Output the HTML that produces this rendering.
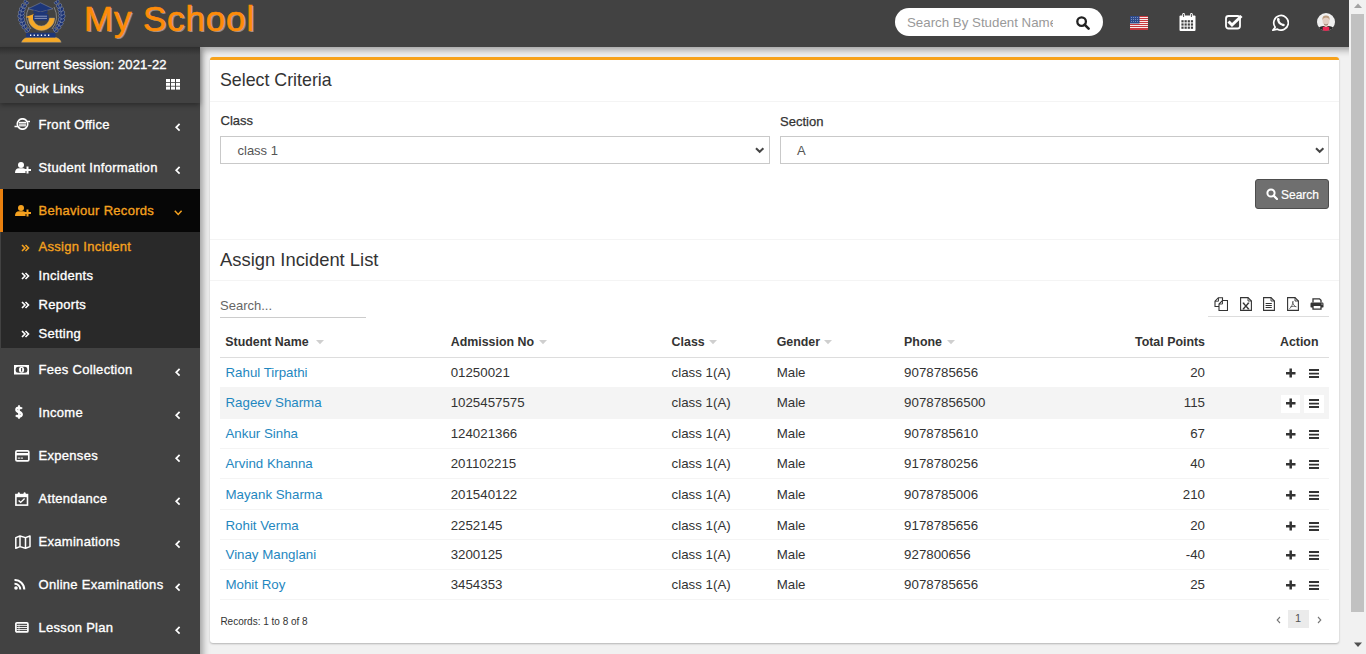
<!DOCTYPE html><html><head><meta charset="utf-8"><title>Assign Incident</title><style>
*{margin:0;padding:0;box-sizing:border-box}
html,body{width:1366px;height:654px;overflow:hidden;background:#f1f1f1;font-family:"Liberation Sans",sans-serif}
.t{position:absolute;line-height:1;white-space:nowrap}
.a{position:absolute;display:block}
.sb{color:#fff;-webkit-text-stroke:0.35px #fff;letter-spacing:0.3px}
.sbo{color:#f4a11f;-webkit-text-stroke:0.35px #f4a11f;letter-spacing:0.3px}
.th{color:#333;font-weight:bold}
.td{color:#333}
</style></head><body>
<div class="a" style="left:200px;top:47px;width:1300px;height:700px;box-shadow:inset 3px 3px 7px rgba(0,0,0,.35)"></div>
<div class="a" style="left:0;top:0;width:1349px;height:47px;background:#424242"></div>
<svg class="a" style="left:10px;top:0px;" width="65" height="46" viewBox="10 0 65 46">
<ellipse cx="26.6" cy="31.06" rx="1.82" ry="1.29" transform="rotate(-166.7 26.60 31.06)" fill="#1b3274" stroke="#b4bccf" stroke-width="0.35"/><ellipse cx="28.24" cy="29.6" rx="1.82" ry="1.29" transform="rotate(-96.7 28.24 29.60)" fill="#1b3274" stroke="#b4bccf" stroke-width="0.35"/><ellipse cx="23.88" cy="27.57" rx="2.03" ry="1.44" transform="rotate(-158.9 23.88 27.57)" fill="#1b3274" stroke="#b4bccf" stroke-width="0.35"/><ellipse cx="25.7" cy="26.34" rx="2.03" ry="1.44" transform="rotate(-88.9 25.70 26.34)" fill="#1b3274" stroke="#b4bccf" stroke-width="0.35"/><ellipse cx="21.87" cy="24.01" rx="2.23" ry="1.59" transform="rotate(-149.7 21.87 24.01)" fill="#1b3274" stroke="#b4bccf" stroke-width="0.35"/><ellipse cx="23.87" cy="23.09" rx="2.23" ry="1.59" transform="rotate(-79.7 23.87 23.09)" fill="#1b3274" stroke="#b4bccf" stroke-width="0.35"/><ellipse cx="20.58" cy="20.37" rx="2.44" ry="1.72" transform="rotate(-139.1 20.58 20.37)" fill="#1b3274" stroke="#b4bccf" stroke-width="0.35"/><ellipse cx="22.71" cy="19.84" rx="2.44" ry="1.72" transform="rotate(-69.1 22.71 19.84)" fill="#1b3274" stroke="#b4bccf" stroke-width="0.35"/><ellipse cx="20.03" cy="16.68" rx="2.64" ry="1.88" transform="rotate(-127.7 20.03 16.68)" fill="#1b3274" stroke="#b4bccf" stroke-width="0.35"/><ellipse cx="22.22" cy="16.57" rx="2.64" ry="1.88" transform="rotate(-57.7 22.22 16.57)" fill="#1b3274" stroke="#b4bccf" stroke-width="0.35"/><ellipse cx="20.22" cy="12.94" rx="2.44" ry="1.72" transform="rotate(-116.4 20.22 12.94)" fill="#1b3274" stroke="#b4bccf" stroke-width="0.35"/><ellipse cx="22.4" cy="13.27" rx="2.44" ry="1.72" transform="rotate(-46.4 22.40 13.27)" fill="#1b3274" stroke="#b4bccf" stroke-width="0.35"/><ellipse cx="21.16" cy="9.19" rx="2.23" ry="1.59" transform="rotate(-105.9 21.16 9.19)" fill="#1b3274" stroke="#b4bccf" stroke-width="0.35"/><ellipse cx="23.24" cy="9.91" rx="2.23" ry="1.59" transform="rotate(-35.9 23.24 9.91)" fill="#1b3274" stroke="#b4bccf" stroke-width="0.35"/><ellipse cx="22.82" cy="5.44" rx="2.03" ry="1.44" transform="rotate(-96.7 22.82 5.44)" fill="#1b3274" stroke="#b4bccf" stroke-width="0.35"/><ellipse cx="24.76" cy="6.48" rx="2.03" ry="1.44" transform="rotate(-26.7 24.76 6.48)" fill="#1b3274" stroke="#b4bccf" stroke-width="0.35"/><ellipse cx="25.2" cy="1.68" rx="1.82" ry="1.29" transform="rotate(-89.0 25.20 1.68)" fill="#1b3274" stroke="#b4bccf" stroke-width="0.35"/><ellipse cx="26.98" cy="2.97" rx="1.82" ry="1.29" transform="rotate(-19.0 26.98 2.97)" fill="#1b3274" stroke="#b4bccf" stroke-width="0.35"/><ellipse cx="54.76" cy="29.6" rx="1.82" ry="1.29" transform="rotate(-83.3 54.76 29.60)" fill="#1b3274" stroke="#b4bccf" stroke-width="0.35"/><ellipse cx="56.4" cy="31.06" rx="1.82" ry="1.29" transform="rotate(-13.3 56.40 31.06)" fill="#1b3274" stroke="#b4bccf" stroke-width="0.35"/><ellipse cx="57.3" cy="26.34" rx="2.03" ry="1.44" transform="rotate(-91.1 57.30 26.34)" fill="#1b3274" stroke="#b4bccf" stroke-width="0.35"/><ellipse cx="59.12" cy="27.57" rx="2.03" ry="1.44" transform="rotate(-21.1 59.12 27.57)" fill="#1b3274" stroke="#b4bccf" stroke-width="0.35"/><ellipse cx="59.13" cy="23.09" rx="2.23" ry="1.59" transform="rotate(-100.3 59.13 23.09)" fill="#1b3274" stroke="#b4bccf" stroke-width="0.35"/><ellipse cx="61.13" cy="24.01" rx="2.23" ry="1.59" transform="rotate(-30.3 61.13 24.01)" fill="#1b3274" stroke="#b4bccf" stroke-width="0.35"/><ellipse cx="60.29" cy="19.84" rx="2.44" ry="1.72" transform="rotate(-110.9 60.29 19.84)" fill="#1b3274" stroke="#b4bccf" stroke-width="0.35"/><ellipse cx="62.42" cy="20.37" rx="2.44" ry="1.72" transform="rotate(-40.9 62.42 20.37)" fill="#1b3274" stroke="#b4bccf" stroke-width="0.35"/><ellipse cx="60.78" cy="16.57" rx="2.64" ry="1.88" transform="rotate(-122.3 60.78 16.57)" fill="#1b3274" stroke="#b4bccf" stroke-width="0.35"/><ellipse cx="62.97" cy="16.68" rx="2.64" ry="1.88" transform="rotate(-52.3 62.97 16.68)" fill="#1b3274" stroke="#b4bccf" stroke-width="0.35"/><ellipse cx="60.6" cy="13.27" rx="2.44" ry="1.72" transform="rotate(-133.6 60.60 13.27)" fill="#1b3274" stroke="#b4bccf" stroke-width="0.35"/><ellipse cx="62.78" cy="12.94" rx="2.44" ry="1.72" transform="rotate(-63.6 62.78 12.94)" fill="#1b3274" stroke="#b4bccf" stroke-width="0.35"/><ellipse cx="59.76" cy="9.91" rx="2.23" ry="1.59" transform="rotate(-144.1 59.76 9.91)" fill="#1b3274" stroke="#b4bccf" stroke-width="0.35"/><ellipse cx="61.84" cy="9.19" rx="2.23" ry="1.59" transform="rotate(-74.1 61.84 9.19)" fill="#1b3274" stroke="#b4bccf" stroke-width="0.35"/><ellipse cx="58.24" cy="6.48" rx="2.03" ry="1.44" transform="rotate(-153.3 58.24 6.48)" fill="#1b3274" stroke="#b4bccf" stroke-width="0.35"/><ellipse cx="60.18" cy="5.44" rx="2.03" ry="1.44" transform="rotate(-83.3 60.18 5.44)" fill="#1b3274" stroke="#b4bccf" stroke-width="0.35"/><ellipse cx="56.02" cy="2.97" rx="1.82" ry="1.29" transform="rotate(-161.0 56.02 2.97)" fill="#1b3274" stroke="#b4bccf" stroke-width="0.35"/><ellipse cx="57.8" cy="1.68" rx="1.82" ry="1.29" transform="rotate(-91.0 57.80 1.68)" fill="#1b3274" stroke="#b4bccf" stroke-width="0.35"/>
<path d="M31 29 Q 23 19 29 7" fill="none" stroke="#8a8a8a" stroke-width="0.9"/>
<path d="M52 29 Q 60 19 54 7" fill="none" stroke="#8a8a8a" stroke-width="0.9"/>
<path d="M28.3 18 A 13.2 12.5 0 0 0 54.7 18 L 49.5 18 A 8.3 9 0 0 1 33 18 Z" fill="#f6a927" stroke="#9a9a9a" stroke-width="0.4"/>
<path d="M25.5 17 L 34 14 L 34 19.5 Z" fill="#f6a927"/>
<rect x="33" y="14" width="15.5" height="6.4" rx="1.5" fill="#1d3679"/>
<rect x="34.5" y="15.8" width="12.5" height="0.7" fill="#b9c0d8"/>
<rect x="34.5" y="17.9" width="12.5" height="0.7" fill="#b9c0d8"/>
<path d="M28 8.8 L 40.5 2.8 L 53 8.8 L 40.5 12 Z" fill="#1d3679" stroke="#8d93a3" stroke-width="0.5"/>
<path d="M33.5 10 Q 40.5 14 47.5 10 L 47.5 13.2 Q 40.5 15.5 33.5 13.2 Z" fill="#1d3679"/>
<path d="M21.5 42.3 Q 23.5 37 30 37.3 L 53 37.3 Q 59.5 37 61.2 42.3 Z" fill="#f6a927" stroke="#9a9a9a" stroke-width="0.4"/>
<rect x="26" y="32.8" width="29.5" height="4.8" rx="1.2" fill="#1d3679"/>
<g fill="#fff"><rect x="30" y="34.5" width="1.3" height="1.5"/><rect x="33.6" y="34.5" width="1.3" height="1.5"/><rect x="37.2" y="34.5" width="1.3" height="1.5"/><rect x="40.8" y="34.5" width="1.3" height="1.5"/><rect x="44.4" y="34.5" width="1.3" height="1.5"/><rect x="48" y="34.5" width="1.3" height="1.5"/></g>
</svg>
<div class="t " style="left:84.00px;top:1.17px;font-size:35px;color:#fd8b08;letter-spacing:0.85px;-webkit-text-stroke:0.7px #fd8b08;text-shadow:1.6px 1px 0 #8f8f8f">My School</div>
<div class="a" style="left:895px;top:8px;width:208px;height:28px;border-radius:14px;background:#fff"></div>
<div class="a" style="left:907px;top:0;width:146px;height:46px;overflow:hidden"><div class="t " style="left:0.00px;top:16.14px;font-size:13.3px;color:#999">Search By Student Name</div>
</div>
<svg class="a" style="left:1076px;top:16px;" width="14" height="14" viewBox="0 0 14 14"><circle cx="5.6" cy="5.6" r="4.3" fill="none" stroke="#222" stroke-width="2.3"/><path d="M8.6 8.6 L12.6 12.6" stroke="#222" stroke-width="2.6" stroke-linecap="round"/></svg>
<svg class="a" style="left:1130px;top:16px;" width="18" height="14" viewBox="0 0 18 14"><rect width="18" height="14" fill="#fff"/><rect y="0" width="18" height="1.1" fill="#c8393f"/><rect y="2" width="18" height="1.1" fill="#c8393f"/><rect y="4" width="18" height="1.1" fill="#c8393f"/><rect y="6" width="18" height="1.1" fill="#c8393f"/><rect y="8" width="18" height="1.1" fill="#c8393f"/><rect y="10" width="18" height="1.1" fill="#c8393f"/><rect y="12" width="18" height="1.1" fill="#c8393f"/><rect y="13" width="18" height="1" fill="#c8393f"/><rect width="9.5" height="7.5" fill="#2d4a8a"/><g fill="#aab6d6"><rect x="1" y="1" width="0.8" height="0.8"/><rect x="3" y="1" width="0.8" height="0.8"/><rect x="5" y="1" width="0.8" height="0.8"/><rect x="7" y="1" width="0.8" height="0.8"/><rect x="1" y="3" width="0.8" height="0.8"/><rect x="3" y="3" width="0.8" height="0.8"/><rect x="5" y="3" width="0.8" height="0.8"/><rect x="7" y="3" width="0.8" height="0.8"/><rect x="1" y="5" width="0.8" height="0.8"/><rect x="3" y="5" width="0.8" height="0.8"/><rect x="5" y="5" width="0.8" height="0.8"/><rect x="7" y="5" width="0.8" height="0.8"/></g></svg>
<svg class="a" style="left:1179px;top:13px;" width="17" height="18" viewBox="0 0 17 18"><rect x="0.5" y="2.5" width="16" height="15.5" rx="1" fill="#fff"/><rect x="2.40" y="7.20" width="2.2" height="2.2" fill="#424242"/><rect x="5.55" y="7.20" width="2.2" height="2.2" fill="#424242"/><rect x="8.70" y="7.20" width="2.2" height="2.2" fill="#424242"/><rect x="11.85" y="7.20" width="2.2" height="2.2" fill="#424242"/><rect x="2.40" y="10.40" width="2.2" height="2.2" fill="#424242"/><rect x="5.55" y="10.40" width="2.2" height="2.2" fill="#424242"/><rect x="8.70" y="10.40" width="2.2" height="2.2" fill="#424242"/><rect x="11.85" y="10.40" width="2.2" height="2.2" fill="#424242"/><rect x="2.40" y="13.60" width="2.2" height="2.2" fill="#424242"/><rect x="5.55" y="13.60" width="2.2" height="2.2" fill="#424242"/><rect x="8.70" y="13.60" width="2.2" height="2.2" fill="#424242"/><rect x="11.85" y="13.60" width="2.2" height="2.2" fill="#424242"/><rect x="3.3" y="0" width="2.6" height="5" rx="1.3" fill="#fff"/><rect x="11.1" y="0" width="2.6" height="5" rx="1.3" fill="#fff"/><rect x="4.1" y="1" width="1" height="3" fill="#555"/><rect x="11.9" y="1" width="1" height="3" fill="#555"/></svg>
<svg class="a" style="left:1225px;top:14px;" width="18" height="16" viewBox="0 0 18 16"><rect x="1" y="2" width="14" height="12.5" rx="2.5" fill="none" stroke="#fff" stroke-width="1.8"/><path d="M3.5 7.5 L7 11 L16.5 2" fill="none" stroke="#fff" stroke-width="3" stroke-linejoin="miter"/></svg>
<svg class="a" style="left:1272px;top:14px;" width="17" height="17" viewBox="0 0 17 17"><path d="M3.2 13.2 A7.3 7.3 0 1 1 5.5 15.2 L0.8 16.2 Z" fill="none" stroke="#fff" stroke-width="1.7" stroke-linejoin="round"/><path d="M6.2 5.6 Q 6.4 9.6 11.2 11" fill="none" stroke="#fff" stroke-width="2.1" stroke-linecap="round"/><circle cx="6.3" cy="5.4" r="1.3" fill="#fff"/><circle cx="11.4" cy="11" r="1.3" fill="#fff"/></svg>
<svg class="a" style="left:1317px;top:13px;" width="18" height="18" viewBox="0 0 18 18"><defs><clipPath id="avc"><circle cx="9" cy="9" r="9"/></clipPath></defs><circle cx="9" cy="9" r="9" fill="#f0f0f0"/><g clip-path="url(#avc)"><path d="M0 19 L 1.5 14.5 Q 4 13 6 13 L 12 13 Q 14 13 16.5 14.5 L 18 19 Z" fill="#2b2b2b"/><path d="M5.5 19 L 5.8 13.8 L 12.2 13.8 L 12.5 19 Z" fill="#ee2a56"/><rect x="7.6" y="11" width="2.8" height="3" fill="#d8b9a9"/><ellipse cx="9" cy="7.6" rx="3.5" ry="4.6" fill="#e4cfc4"/><path d="M5.4 7 Q 5 2.6 9 2.6 Q 13 2.6 12.6 7 Q 12 4.5 9 4.4 Q 6 4.5 5.4 7 Z" fill="#bc9d80"/><path d="M7 11.2 Q 9 12.6 11 11.2" stroke="#9a7f6f" stroke-width="0.9" fill="none"/></g></svg>
<div class="a" style="left:0;top:47px;width:200px;height:607px;background:#424242"></div>
<div class="a" style="left:0;top:47px;width:200px;height:8px;background:linear-gradient(#2e2e2e,#424242)"></div>
<div class="a" style="left:0;top:47px;width:200px;height:56px;background:linear-gradient(#2e2e2e,#424242 8px);box-shadow:0 2px 5px rgba(0,0,0,.35)"></div>
<div class="t sb" style="left:15.00px;top:58.00px;font-size:13px;letter-spacing:0.15px">Current Session: 2021-22</div>
<div class="t sb" style="left:15.00px;top:81.70px;font-size:13px;letter-spacing:0.15px">Quick Links</div>
<svg class="a" style="left:166px;top:79px;" width="14" height="11" viewBox="0 0 14 11"><g fill="#fff"><rect x="0" y="0.0" width="4" height="3" /><rect x="5" y="0.0" width="4" height="3" /><rect x="10" y="0.0" width="4" height="3" /><rect x="0" y="3.8" width="4" height="3" /><rect x="5" y="3.8" width="4" height="3" /><rect x="10" y="3.8" width="4" height="3" /><rect x="0" y="7.6" width="4" height="3" /><rect x="5" y="7.6" width="4" height="3" /><rect x="10" y="7.6" width="4" height="3" /></g></svg>
<svg class="a" style="left:14px;top:118px;" width="17" height="12" viewBox="0 0 17 12"><circle cx="8.5" cy="6" r="5.2" fill="none" stroke="#fff" stroke-width="1.7"/><rect x="5" y="3.8" width="7" height="1.2" fill="#fff"/><rect x="5" y="5.5" width="7" height="1.2" fill="#fff"/><rect x="5" y="7.2" width="7" height="1.2" fill="#fff"/><path d="M0.5 8.6 H4 M13 3.4 H16" stroke="#fff" stroke-width="1.5"/></svg>
<svg class="a" style="left:174px;top:123px;" width="7" height="9" viewBox="0 0 7 9"><path d="M5.6 0.9 L2.2 4.3 L5.6 7.7" fill="none" stroke="#fff" stroke-width="1.7"/></svg>
<div class="t sb" style="left:38.50px;top:117.70px;font-size:13px;">Front Office</div>
<svg class="a" style="left:14.5px;top:162px;" width="17" height="12" viewBox="0 0 17 12"><circle cx="6" cy="3" r="3" fill="#fff"/><path d="M0 11 Q0 6.5 4 6.3 L8 6.3 Q 9.5 6.4 10.5 7.5 L 10.5 11 Z" fill="#fff"/><path d="M9 8 H16 M12.5 4.5 V11.5" stroke="#fff" stroke-width="2"/><path d="M8.8 6.5 V 11" stroke="#424242" stroke-width="0.8" opacity="0"/></svg>
<svg class="a" style="left:174px;top:166px;" width="7" height="9" viewBox="0 0 7 9"><path d="M5.6 0.9 L2.2 4.3 L5.6 7.7" fill="none" stroke="#fff" stroke-width="1.7"/></svg>
<div class="t sb" style="left:38.50px;top:161.00px;font-size:13px;">Student Information</div>
<div class="a" style="left:0;top:189px;width:200px;height:43px;background:#060606"></div>
<div class="a" style="left:0;top:189px;width:3px;height:43px;background:#e8800f"></div>
<svg class="a" style="left:14.5px;top:205px;" width="17" height="12" viewBox="0 0 17 12"><circle cx="6" cy="3" r="3" fill="#f4a11f"/><path d="M0 11 Q0 6.5 4 6.3 L8 6.3 Q 9.5 6.4 10.5 7.5 L 10.5 11 Z" fill="#f4a11f"/><path d="M9 8 H16 M12.5 4.5 V11.5" stroke="#f4a11f" stroke-width="2"/><path d="M8.8 6.5 V 11" stroke="#424242" stroke-width="0.8" opacity="0"/></svg>
<svg class="a" style="left:174px;top:209.5px;" width="9" height="6" viewBox="0 0 9 6"><path d="M0.8 0.8 L4.2 4.4 L7.6 0.8" fill="none" stroke="#f4a11f" stroke-width="1.5"/></svg>
<div class="t sbo" style="left:38.50px;top:204.00px;font-size:13px;">Behaviour Records</div>
<div class="a" style="left:1px;top:232px;width:199px;height:116px;background:#292929"></div>
<svg class="a" style="left:20.5px;top:243.6px;" width="9" height="8" viewBox="0 0 9 8"><path d="M1 1 L4 4 L1 7 M4.5 1 L7.5 4 L4.5 7" fill="none" stroke="#f4a11f" stroke-width="1.6"/></svg>
<div class="t sbo" style="left:38.50px;top:239.90px;font-size:13px;">Assign Incident</div>
<svg class="a" style="left:20.5px;top:272.4px;" width="9" height="8" viewBox="0 0 9 8"><path d="M1 1 L4 4 L1 7 M4.5 1 L7.5 4 L4.5 7" fill="none" stroke="#fff" stroke-width="1.6"/></svg>
<div class="t sb" style="left:38.50px;top:268.70px;font-size:13px;">Incidents</div>
<svg class="a" style="left:20.5px;top:301.4px;" width="9" height="8" viewBox="0 0 9 8"><path d="M1 1 L4 4 L1 7 M4.5 1 L7.5 4 L4.5 7" fill="none" stroke="#fff" stroke-width="1.6"/></svg>
<div class="t sb" style="left:38.50px;top:297.70px;font-size:13px;">Reports</div>
<svg class="a" style="left:20.5px;top:330.4px;" width="9" height="8" viewBox="0 0 9 8"><path d="M1 1 L4 4 L1 7 M4.5 1 L7.5 4 L4.5 7" fill="none" stroke="#fff" stroke-width="1.6"/></svg>
<div class="t sb" style="left:38.50px;top:326.70px;font-size:13px;">Setting</div>
<svg class="a" style="left:14.3px;top:364.7px;" width="15" height="10" viewBox="0 0 15 10"><rect x="0" y="0" width="15" height="9.5" fill="#fff"/><rect x="1.7" y="1.7" width="11.6" height="6.1" rx="2.5" fill="#424242"/><ellipse cx="7.5" cy="4.75" rx="2.6" ry="2.9" fill="#fff"/><path d="M7.6 3 V6.6" stroke="#424242" stroke-width="1.1"/></svg>
<svg class="a" style="left:174px;top:368.4px;" width="7" height="9" viewBox="0 0 7 9"><path d="M5.6 0.9 L2.2 4.3 L5.6 7.7" fill="none" stroke="#fff" stroke-width="1.7"/></svg>
<div class="t sb" style="left:38.50px;top:362.90px;font-size:13px;">Fees Collection</div>
<svg class="a" style="left:14.8px;top:405.4px;" width="8" height="14" viewBox="0 0 8 14"><path d="M6.9 3.8 Q 6 2.6 4 2.6 Q 1.4 2.6 1.4 4.7 Q 1.4 6.3 4 7 Q 6.7 7.7 6.7 9.6 Q 6.7 11.5 4 11.5 Q 2 11.5 1 10.2" fill="none" stroke="#fff" stroke-width="2.4"/><path d="M4 0.3 V13.7" stroke="#fff" stroke-width="1.8"/></svg>
<svg class="a" style="left:174px;top:411.4px;" width="7" height="9" viewBox="0 0 7 9"><path d="M5.6 0.9 L2.2 4.3 L5.6 7.7" fill="none" stroke="#fff" stroke-width="1.7"/></svg>
<div class="t sb" style="left:38.50px;top:405.90px;font-size:13px;">Income</div>
<svg class="a" style="left:14.8px;top:449.8px;" width="15" height="12" viewBox="0 0 15 12"><rect x="0.9" y="0.9" width="12.9" height="10" rx="1.2" fill="none" stroke="#fff" stroke-width="1.7"/><rect x="1" y="3" width="13" height="2.4" fill="#fff"/><rect x="2.8" y="7.6" width="2.6" height="1" fill="#fff"/><rect x="6" y="7.6" width="2" height="1" fill="#fff"/></svg>
<svg class="a" style="left:174px;top:454.4px;" width="7" height="9" viewBox="0 0 7 9"><path d="M5.6 0.9 L2.2 4.3 L5.6 7.7" fill="none" stroke="#fff" stroke-width="1.7"/></svg>
<div class="t sb" style="left:38.50px;top:448.90px;font-size:13px;">Expenses</div>
<svg class="a" style="left:14.5px;top:491.6px;" width="14" height="14" viewBox="0 0 14 14"><rect x="0.9" y="2.6" width="11.6" height="10.5" fill="none" stroke="#fff" stroke-width="1.6"/><rect x="1" y="2.6" width="11.5" height="2.6" fill="#fff"/><rect x="2.8" y="0.3" width="2" height="3.2" rx="1" fill="#fff"/><rect x="8.6" y="0.3" width="2" height="3.2" rx="1" fill="#fff"/><path d="M3.6 8.4 L5.7 10.4 L9.6 6.6" fill="none" stroke="#fff" stroke-width="1.4"/></svg>
<svg class="a" style="left:174px;top:497.4px;" width="7" height="9" viewBox="0 0 7 9"><path d="M5.6 0.9 L2.2 4.3 L5.6 7.7" fill="none" stroke="#fff" stroke-width="1.7"/></svg>
<div class="t sb" style="left:38.50px;top:491.90px;font-size:13px;">Attendance</div>
<svg class="a" style="left:14.5px;top:534.5px;" width="16" height="14" viewBox="0 0 16 14"><path d="M0.8 2.6 L5 1 L10.5 2.6 L15 1 V11.6 L10.5 13.2 L5 11.6 L0.8 13.2 Z" fill="none" stroke="#fff" stroke-width="1.5" stroke-linejoin="round"/><path d="M5 1 V11.6 M10.5 2.6 V13.2" stroke="#fff" stroke-width="1.5"/></svg>
<svg class="a" style="left:174px;top:540.4px;" width="7" height="9" viewBox="0 0 7 9"><path d="M5.6 0.9 L2.2 4.3 L5.6 7.7" fill="none" stroke="#fff" stroke-width="1.7"/></svg>
<div class="t sb" style="left:38.50px;top:534.90px;font-size:13px;">Examinations</div>
<svg class="a" style="left:14.3px;top:579px;" width="12" height="11" viewBox="0 0 12 11"><circle cx="2" cy="9" r="1.8" fill="#fff"/><path d="M0.5 4.7 A 5.8 5.8 0 0 1 6.3 10.5" fill="none" stroke="#fff" stroke-width="2"/><path d="M0.5 1 A 9.5 9.5 0 0 1 10.3 10.5" fill="none" stroke="#fff" stroke-width="2"/></svg>
<svg class="a" style="left:174px;top:583.4px;" width="7" height="9" viewBox="0 0 7 9"><path d="M5.6 0.9 L2.2 4.3 L5.6 7.7" fill="none" stroke="#fff" stroke-width="1.7"/></svg>
<div class="t sb" style="left:38.50px;top:577.90px;font-size:13px;">Online Examinations</div>
<svg class="a" style="left:14.8px;top:621.8px;" width="14" height="11" viewBox="0 0 14 11"><rect x="0.9" y="0.9" width="12" height="9" rx="1" fill="none" stroke="#fff" stroke-width="1.7"/><path d="M1.5 3.4 H12.3 M1.5 5.5 H12.3 M1.5 7.6 H12.3" stroke="#fff" stroke-width="0.9"/><path d="M4 2.5 V10" stroke="#fff" stroke-width="0.6"/></svg>
<svg class="a" style="left:174px;top:626.4px;" width="7" height="9" viewBox="0 0 7 9"><path d="M5.6 0.9 L2.2 4.3 L5.6 7.7" fill="none" stroke="#fff" stroke-width="1.7"/></svg>
<div class="t sb" style="left:38.50px;top:620.90px;font-size:13px;">Lesson Plan</div>
<div class="a" style="left:210px;top:57px;width:1129px;height:586px;background:#fff;border-top:3px solid #f7a21b;border-radius:3px;box-shadow:0 1px 2px rgba(0,0,0,.25)"></div>
<div class="t " style="left:220.00px;top:71.73px;font-size:17.8px;color:#333">Select Criteria</div>
<div class="a" style="left:210px;top:101px;width:1129px;height:1px;background:#f4f4f4"></div>
<div class="t " style="left:220.50px;top:114.30px;font-size:13px;color:#333;-webkit-text-stroke:0.25px #333">Class</div>
<div class="t " style="left:780.00px;top:114.50px;font-size:13px;color:#333;-webkit-text-stroke:0.25px #333">Section</div>
<div class="a" style="left:220px;top:136px;width:550px;height:28px;border:1px solid #c9c9c9"></div>
<div class="a" style="left:780px;top:136px;width:549px;height:28px;border:1px solid #c9c9c9"></div>
<div class="t " style="left:237.50px;top:143.60px;font-size:13px;color:#555">class 1</div>
<div class="t " style="left:797.00px;top:143.70px;font-size:13px;color:#555">A</div>
<svg class="a" style="left:755px;top:147px;" width="10" height="7" viewBox="0 0 10 7"><path d="M1 1.2 L4.7 4.8 L8.4 1.2" fill="none" stroke="#444" stroke-width="2"/></svg>
<svg class="a" style="left:1315px;top:147px;" width="10" height="7" viewBox="0 0 10 7"><path d="M1 1.2 L4.7 4.8 L8.4 1.2" fill="none" stroke="#444" stroke-width="2"/></svg>
<div class="a" style="left:1255px;top:179px;width:74px;height:30px;background:#6f6f6f;border:1px solid #4d4d4d;border-radius:3px"></div>
<svg class="a" style="left:1266px;top:188px;" width="12" height="12" viewBox="0 0 12 12"><circle cx="5" cy="5" r="3.6" fill="none" stroke="#fff" stroke-width="2"/><path d="M7.6 7.6 L11 11" stroke="#fff" stroke-width="2.2" stroke-linecap="round"/></svg>
<div class="t " style="left:1281.00px;top:188.64px;font-size:12px;color:#fff;-webkit-text-stroke:0.2px #fff">Search</div>
<div class="a" style="left:210px;top:239px;width:1129px;height:1px;background:#f4f4f4"></div>
<div class="t " style="left:220.00px;top:251.42px;font-size:18.4px;color:#333">Assign Incident List</div>
<div class="a" style="left:210px;top:280px;width:1129px;height:1px;background:#f4f4f4"></div>
<div class="t " style="left:220.00px;top:299.00px;font-size:13px;color:#666">Search...</div>
<div class="a" style="left:220px;top:317px;width:146px;height:1px;background:#ccc"></div>
<div class="a" style="left:1208px;top:316px;width:121px;height:1px;background:#ddd"></div>
<svg class="a" style="left:1214px;top:297px;" width="14" height="14" viewBox="0 0 14 14"><path d="M4.5 0.7 H8.5 V3.5 M4.5 0.7 L1 4.2 V9.5 H5" fill="none" stroke="#333" stroke-width="1.1"/><path d="M1 4.2 H4.5 V0.7" fill="none" stroke="#333" stroke-width="0.9"/><path d="M8.5 3.5 H13.5 V13.5 H5 V7 L8.5 3.5 Z" fill="none" stroke="#333" stroke-width="1.1"/><path d="M5 7 H8.5 V3.5" fill="none" stroke="#333" stroke-width="0.9"/></svg>
<svg class="a" style="left:1240px;top:297px;" width="12" height="14" viewBox="0 0 12 14"><path d="M0.6 0.6 H8 L11.4 4 V13.4 H0.6 Z" fill="none" stroke="#333" stroke-width="1.1"/><path d="M8 0.6 V4 H11.4" fill="none" stroke="#333" stroke-width="0.9"/><path d="M3.2 6 L8.6 12 M8.6 6 L3.2 12" stroke="#333" stroke-width="1.3"/><path d="M2.6 6 H4.4 M7.6 6 H9.4 M2.6 12 H4.4 M7.6 12 H9.4" stroke="#333" stroke-width="0.7"/></svg>
<svg class="a" style="left:1263px;top:297px;" width="12" height="14" viewBox="0 0 12 14"><path d="M0.6 0.6 H8 L11.4 4 V13.4 H0.6 Z" fill="none" stroke="#333" stroke-width="1.1"/><path d="M8 0.6 V4 H11.4" fill="none" stroke="#333" stroke-width="0.9"/><path d="M2.6 6.5 H8.8 M2.6 8.5 H8.8 M2.6 10.5 H8.8" stroke="#333" stroke-width="1"/></svg>
<svg class="a" style="left:1287px;top:297px;" width="12" height="14" viewBox="0 0 12 14"><path d="M0.6 0.6 H8 L11.4 4 V13.4 H0.6 Z" fill="none" stroke="#333" stroke-width="1.1"/><path d="M8 0.6 V4 H11.4" fill="none" stroke="#333" stroke-width="0.9"/><path d="M6 4 C 5.2 6 6.4 8 8.5 9.5 M6 4.5 C 6 7.5 4 10 2.5 11.8 M3.5 10 C 5.5 9 7.5 9.2 9.5 9.8" fill="none" stroke="#333" stroke-width="0.7"/></svg>
<svg class="a" style="left:1309.5px;top:298px;" width="14" height="12" viewBox="0 0 14 12"><path d="M3 4.5 V0.8 H9.5 L11 2.3 V4.5" fill="none" stroke="#333" stroke-width="1.3"/><rect x="0.5" y="4.6" width="13" height="5" rx="1.2" fill="#333"/><path d="M3 8 V11.2 H11 V8" fill="#fff" stroke="#333" stroke-width="1.3"/><circle cx="12" cy="6" r="0.6" fill="#fff"/></svg>
<div class="t th" style="left:225.30px;top:336.40px;font-size:12.4px;">Student Name</div>
<svg class="a" style="left:315.5px;top:340px;" width="8" height="5" viewBox="0 0 8 5"><path d="M0 0 H8 L4 4.3 Z" fill="#cfcfcf"/></svg>
<div class="t th" style="left:450.70px;top:336.40px;font-size:12.4px;">Admission No</div>
<svg class="a" style="left:539px;top:340px;" width="8" height="5" viewBox="0 0 8 5"><path d="M0 0 H8 L4 4.3 Z" fill="#cfcfcf"/></svg>
<div class="t th" style="left:671.60px;top:336.40px;font-size:12.4px;">Class</div>
<svg class="a" style="left:709px;top:340px;" width="8" height="5" viewBox="0 0 8 5"><path d="M0 0 H8 L4 4.3 Z" fill="#cfcfcf"/></svg>
<div class="t th" style="left:776.70px;top:336.40px;font-size:12.4px;">Gender</div>
<svg class="a" style="left:823.6px;top:340px;" width="8" height="5" viewBox="0 0 8 5"><path d="M0 0 H8 L4 4.3 Z" fill="#cfcfcf"/></svg>
<div class="t th" style="left:904.10px;top:336.40px;font-size:12.4px;">Phone</div>
<svg class="a" style="left:946.6px;top:340px;" width="8" height="5" viewBox="0 0 8 5"><path d="M0 0 H8 L4 4.3 Z" fill="#cfcfcf"/></svg>
<div class="t th" style="right:161.00px;top:336.40px;font-size:12.4px;">Total Points</div>
<div class="t th" style="right:47.50px;top:336.40px;font-size:12.4px;">Action</div>
<div class="a" style="left:220px;top:356.5px;width:1109px;height:1.5px;background:#ddd"></div>
<div class="a" style="left:220px;top:387px;width:1109px;height:1px;background:#f4f4f4"></div>
<div class="t " style="left:225.50px;top:365.94px;font-size:13.3px;color:#1f87c0">Rahul Tirpathi</div>
<div class="t td" style="left:450.70px;top:365.94px;font-size:13.3px;">01250021</div>
<div class="t td" style="left:671.60px;top:365.94px;font-size:13.3px;">class 1(A)</div>
<div class="t td" style="left:776.70px;top:365.94px;font-size:13.3px;">Male</div>
<div class="t td" style="left:904.10px;top:365.94px;font-size:13.3px;">9078785656</div>
<div class="t td" style="right:161.00px;top:365.94px;font-size:13.3px;">20</div>
<svg class="a" style="left:1286px;top:368px;" width="10" height="10" viewBox="0 0 10 10"><path d="M4.7 0.6 V9.6 M0 5.3 H9.5" stroke="#333" stroke-width="2.5"/></svg>
<svg class="a" style="left:1309px;top:368px;" width="10" height="11" viewBox="0 0 10 11"><path d="M0 2 H10 M0 5.6 H10 M0 9 H10" stroke="#333" stroke-width="1.9"/></svg>
<div class="a" style="left:220px;top:387px;width:1109px;height:32px;background:#f4f4f4"></div>
<div class="a" style="left:1281px;top:395px;width:19px;height:18px;background:#fff"></div>
<div class="a" style="left:1304px;top:395px;width:20px;height:18px;background:#fff"></div>
<div class="a" style="left:220px;top:418px;width:1109px;height:1px;background:#f4f4f4"></div>
<div class="t " style="left:225.50px;top:395.94px;font-size:13.3px;color:#1f87c0">Rageev Sharma</div>
<div class="t td" style="left:450.70px;top:395.94px;font-size:13.3px;">1025457575</div>
<div class="t td" style="left:671.60px;top:395.94px;font-size:13.3px;">class 1(A)</div>
<div class="t td" style="left:776.70px;top:395.94px;font-size:13.3px;">Male</div>
<div class="t td" style="left:904.10px;top:395.94px;font-size:13.3px;">90787856500</div>
<div class="t td" style="right:161.00px;top:395.94px;font-size:13.3px;">115</div>
<svg class="a" style="left:1286px;top:398px;" width="10" height="10" viewBox="0 0 10 10"><path d="M4.7 0.6 V9.6 M0 5.3 H9.5" stroke="#333" stroke-width="2.5"/></svg>
<svg class="a" style="left:1309px;top:398px;" width="10" height="11" viewBox="0 0 10 11"><path d="M0 2 H10 M0 5.6 H10 M0 9 H10" stroke="#333" stroke-width="1.9"/></svg>
<div class="a" style="left:220px;top:448px;width:1109px;height:1px;background:#f4f4f4"></div>
<div class="t " style="left:225.50px;top:426.94px;font-size:13.3px;color:#1f87c0">Ankur Sinha</div>
<div class="t td" style="left:450.70px;top:426.94px;font-size:13.3px;">124021366</div>
<div class="t td" style="left:671.60px;top:426.94px;font-size:13.3px;">class 1(A)</div>
<div class="t td" style="left:776.70px;top:426.94px;font-size:13.3px;">Male</div>
<div class="t td" style="left:904.10px;top:426.94px;font-size:13.3px;">9078785610</div>
<div class="t td" style="right:161.00px;top:426.94px;font-size:13.3px;">67</div>
<svg class="a" style="left:1286px;top:429px;" width="10" height="10" viewBox="0 0 10 10"><path d="M4.7 0.6 V9.6 M0 5.3 H9.5" stroke="#333" stroke-width="2.5"/></svg>
<svg class="a" style="left:1309px;top:429px;" width="10" height="11" viewBox="0 0 10 11"><path d="M0 2 H10 M0 5.6 H10 M0 9 H10" stroke="#333" stroke-width="1.9"/></svg>
<div class="a" style="left:220px;top:478px;width:1109px;height:1px;background:#f4f4f4"></div>
<div class="t " style="left:225.50px;top:456.94px;font-size:13.3px;color:#1f87c0">Arvind Khanna</div>
<div class="t td" style="left:450.70px;top:456.94px;font-size:13.3px;">201102215</div>
<div class="t td" style="left:671.60px;top:456.94px;font-size:13.3px;">class 1(A)</div>
<div class="t td" style="left:776.70px;top:456.94px;font-size:13.3px;">Male</div>
<div class="t td" style="left:904.10px;top:456.94px;font-size:13.3px;">9178780256</div>
<div class="t td" style="right:161.00px;top:456.94px;font-size:13.3px;">40</div>
<svg class="a" style="left:1286px;top:459px;" width="10" height="10" viewBox="0 0 10 10"><path d="M4.7 0.6 V9.6 M0 5.3 H9.5" stroke="#333" stroke-width="2.5"/></svg>
<svg class="a" style="left:1309px;top:459px;" width="10" height="11" viewBox="0 0 10 11"><path d="M0 2 H10 M0 5.6 H10 M0 9 H10" stroke="#333" stroke-width="1.9"/></svg>
<div class="a" style="left:220px;top:509px;width:1109px;height:1px;background:#f4f4f4"></div>
<div class="t " style="left:225.50px;top:487.94px;font-size:13.3px;color:#1f87c0">Mayank Sharma</div>
<div class="t td" style="left:450.70px;top:487.94px;font-size:13.3px;">201540122</div>
<div class="t td" style="left:671.60px;top:487.94px;font-size:13.3px;">class 1(A)</div>
<div class="t td" style="left:776.70px;top:487.94px;font-size:13.3px;">Male</div>
<div class="t td" style="left:904.10px;top:487.94px;font-size:13.3px;">9078785006</div>
<div class="t td" style="right:161.00px;top:487.94px;font-size:13.3px;">210</div>
<svg class="a" style="left:1286px;top:490px;" width="10" height="10" viewBox="0 0 10 10"><path d="M4.7 0.6 V9.6 M0 5.3 H9.5" stroke="#333" stroke-width="2.5"/></svg>
<svg class="a" style="left:1309px;top:490px;" width="10" height="11" viewBox="0 0 10 11"><path d="M0 2 H10 M0 5.6 H10 M0 9 H10" stroke="#333" stroke-width="1.9"/></svg>
<div class="a" style="left:220px;top:539px;width:1109px;height:1px;background:#f4f4f4"></div>
<div class="t " style="left:225.50px;top:518.94px;font-size:13.3px;color:#1f87c0">Rohit Verma</div>
<div class="t td" style="left:450.70px;top:518.94px;font-size:13.3px;">2252145</div>
<div class="t td" style="left:671.60px;top:518.94px;font-size:13.3px;">class 1(A)</div>
<div class="t td" style="left:776.70px;top:518.94px;font-size:13.3px;">Male</div>
<div class="t td" style="left:904.10px;top:518.94px;font-size:13.3px;">9178785656</div>
<div class="t td" style="right:161.00px;top:518.94px;font-size:13.3px;">20</div>
<svg class="a" style="left:1286px;top:521px;" width="10" height="10" viewBox="0 0 10 10"><path d="M4.7 0.6 V9.6 M0 5.3 H9.5" stroke="#333" stroke-width="2.5"/></svg>
<svg class="a" style="left:1309px;top:521px;" width="10" height="11" viewBox="0 0 10 11"><path d="M0 2 H10 M0 5.6 H10 M0 9 H10" stroke="#333" stroke-width="1.9"/></svg>
<div class="a" style="left:220px;top:569px;width:1109px;height:1px;background:#f4f4f4"></div>
<div class="t " style="left:225.50px;top:547.94px;font-size:13.3px;color:#1f87c0">Vinay Manglani</div>
<div class="t td" style="left:450.70px;top:547.94px;font-size:13.3px;">3200125</div>
<div class="t td" style="left:671.60px;top:547.94px;font-size:13.3px;">class 1(A)</div>
<div class="t td" style="left:776.70px;top:547.94px;font-size:13.3px;">Male</div>
<div class="t td" style="left:904.10px;top:547.94px;font-size:13.3px;">927800656</div>
<div class="t td" style="right:161.00px;top:547.94px;font-size:13.3px;">-40</div>
<svg class="a" style="left:1286px;top:550px;" width="10" height="10" viewBox="0 0 10 10"><path d="M4.7 0.6 V9.6 M0 5.3 H9.5" stroke="#333" stroke-width="2.5"/></svg>
<svg class="a" style="left:1309px;top:550px;" width="10" height="11" viewBox="0 0 10 11"><path d="M0 2 H10 M0 5.6 H10 M0 9 H10" stroke="#333" stroke-width="1.9"/></svg>
<div class="a" style="left:220px;top:599px;width:1109px;height:1px;background:#f4f4f4"></div>
<div class="t " style="left:225.50px;top:577.94px;font-size:13.3px;color:#1f87c0">Mohit Roy</div>
<div class="t td" style="left:450.70px;top:577.94px;font-size:13.3px;">3454353</div>
<div class="t td" style="left:671.60px;top:577.94px;font-size:13.3px;">class 1(A)</div>
<div class="t td" style="left:776.70px;top:577.94px;font-size:13.3px;">Male</div>
<div class="t td" style="left:904.10px;top:577.94px;font-size:13.3px;">9078785656</div>
<div class="t td" style="right:161.00px;top:577.94px;font-size:13.3px;">25</div>
<svg class="a" style="left:1286px;top:580px;" width="10" height="10" viewBox="0 0 10 10"><path d="M4.7 0.6 V9.6 M0 5.3 H9.5" stroke="#333" stroke-width="2.5"/></svg>
<svg class="a" style="left:1309px;top:580px;" width="10" height="11" viewBox="0 0 10 11"><path d="M0 2 H10 M0 5.6 H10 M0 9 H10" stroke="#333" stroke-width="1.9"/></svg>
<div class="t td" style="left:220.40px;top:617.13px;font-size:10px;">Records: 1 to 8 of 8</div>
<div class="a" style="left:1288px;top:610px;width:21px;height:18px;background:#ebebeb"></div>
<div class="t " style="left:1295.00px;top:613.19px;font-size:11px;color:#555">1</div>
<svg class="a" style="left:1276px;top:615.5px;" width="5" height="8" viewBox="0 0 5 8"><path d="M4 1 L1.2 4 L4 7" fill="none" stroke="#777" stroke-width="1.1"/></svg>
<svg class="a" style="left:1317px;top:615.5px;" width="5" height="8" viewBox="0 0 5 8"><path d="M1 1 L3.8 4 L1 7" fill="none" stroke="#777" stroke-width="1.1"/></svg>
<div class="a" style="left:1349px;top:0;width:17px;height:654px;background:#f1f1f1"></div>
<div class="a" style="left:1351px;top:14px;width:13px;height:598px;background:#c1c1c1"></div>
<svg class="a" style="left:1354px;top:3px;" width="8" height="6" viewBox="0 0 8 6"><path d="M0 5 L4 0.5 L8 5 Z" fill="#a3a3a3"/></svg>
<svg class="a" style="left:1354px;top:642px;" width="8" height="6" viewBox="0 0 8 6"><path d="M0 0.5 L8 0.5 L4 5 Z" fill="#505050"/></svg>
</body></html>
